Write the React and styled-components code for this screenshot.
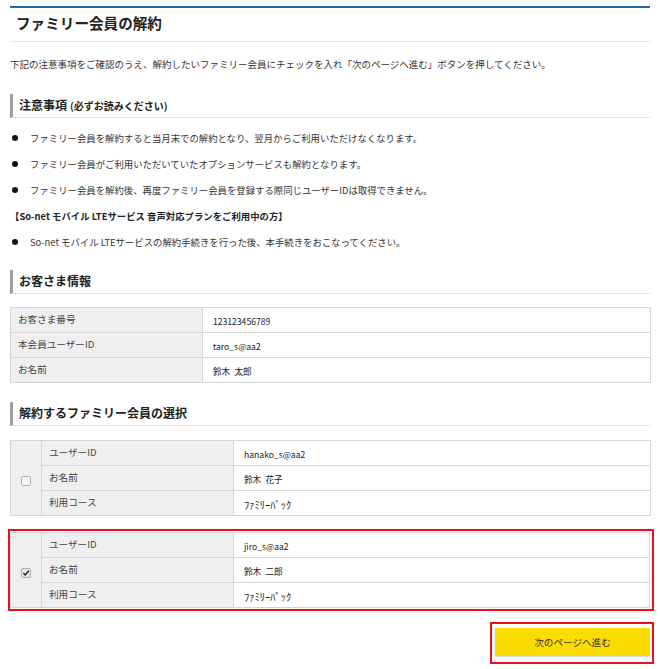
import React from 'react'
import styled, { createGlobalStyle } from 'styled-components'

const GlobalStyle = createGlobalStyle`
  html, body {
    margin: 0;
    padding: 0;
    background: #fff;
  }
  body {
    font-family: "Noto Sans CJK JP", "Noto Sans", sans-serif;
    color: #333;
  }
`

const Page = styled.div`
  width: 640px;
  padding: 6px 10px 0;
`

const TitleBar = styled.div`
  border-top: 2px solid #1d6db3;
  border-bottom: 1px solid #e6e6e6;
  height: 36px;
  box-sizing: border-box;
  padding: 4px 6px 0;
`

const Title = styled.h1`
  margin: 0;
  font-size: 14.6px;
  line-height: 22px;
  font-weight: 700;
  color: #222;
`

const Intro = styled.p`
  margin: 14px 0 0;
  font-size: 9.5px;
  line-height: 16px;
`

const SectionHeading = styled.h2`
  margin: ${p => p.$top}px 0 0;
  height: 24px;
  box-sizing: border-box;
  border-left: 3px solid #9e9e9e;
  border-bottom: 1px dotted #c4c4c4;
  padding-left: 6px;
  font-size: 12px;
  line-height: 22px;
  font-weight: 700;
  color: #222;
`

const Small = styled.span`
  font-size: 10px;
  margin-left: 3px;
`

const NoteList = styled.ul`
  list-style: none;
  margin: 7px 0 0;
  padding: 0;
`

const NoteItem = styled.li`
  display: flex;
  align-items: center;
  height: 26px;
  font-size: 9.4px;
  font-weight: ${p => (p.$bold ? 700 : 400)};
  color: ${p => (p.$bold ? '#222' : '#333')};
`

const Dot = styled.span`
  width: 6px;
  height: 6px;
  border-radius: 50%;
  background: #111;
  margin: 0 12px 0 2px;
  flex: none;
`

const Table = styled.table`
  width: ${p => p.$width || 641}px;
  border-collapse: collapse;
  table-layout: fixed;
  margin-top: ${p => p.$top || 0}px;
  border: 1px solid #d2d2d2;
`

const Row = styled.tr`
  height: 25px;
`

const Label = styled.td`
  background: #efefef;
  border: 1px solid #d6d6d6;
  padding: 0 0 2px 7px;
  font-size: 9.6px;
  color: #444;
  vertical-align: middle;
`

const Value = styled.td`
  background: #fff;
  border: 1px solid #d6d6d6;
  padding: 2px 0 0 10px;
  font-size: ${p => (p.$tiny ? '10.5px' : '8.6px')};
  color: #222;
  vertical-align: middle;
`

const CheckCell = styled.td`
  background: #efefef;
  border: 1px solid #d6d6d6;
  text-align: center;
  vertical-align: middle;
  padding: 0;
`

const Box = styled.span`
  display: inline-block;
  width: 8px;
  height: 8px;
  border: 1px solid #b0b0b0;
  border-radius: 2px;
  background: ${p => (p.$checked ? '#e4e4e4' : '#f6f6f6')};
  position: relative;
  vertical-align: middle;
  svg {
    position: absolute;
    left: 0;
    top: 0;
  }
`

const RedFrame = styled.div`
  margin: 13px -4px 0 -2px;
  border: 2px solid #e8101c;
  padding: 1px 2px 1px 0;
`

const ButtonRow = styled.div`
  display: flex;
  justify-content: flex-end;
  margin: 11px -4px 0 0;
`

const ButtonFrame = styled.div`
  border: 2px solid #e8101c;
  padding: 4px 2px 6px 3px;
`

const NextButton = styled.button`
  width: 155px;
  height: 28px;
  border: none;
  background: #fbdc00;
  box-shadow: 0 1px 2px rgba(0, 0, 0, 0.2);
  font-family: inherit;
  font-size: 9.6px;
  color: #333;
  display: block;
`

function Check({ checked }) {
  return (
    <Box $checked={checked}>
      {checked && (
        <svg width="8" height="8" viewBox="0 0 8 8">
          <path d="M1.4 4.2 L3.2 6 L6.8 1.8" fill="none" stroke="#222" strokeWidth="1.5" />
        </svg>
      )}
    </Box>
  )
}

function MemberTable({ member, checked, top }) {
  return (
    <Table $top={top} $width={checked ? 640 : 641}>
      <colgroup>
        <col style={{ width: 31 }} />
        <col style={{ width: 192 }} />
        <col />
      </colgroup>
      <tbody>
        <Row>
          <CheckCell rowSpan={3}>
            <Check checked={checked} />
          </CheckCell>
          <Label>ユーザーID</Label>
          <Value>{member.id}</Value>
        </Row>
        <Row>
          <Label>お名前</Label>
          <Value>{member.name}</Value>
        </Row>
        <Row>
          <Label>利用コース</Label>
          <Value $tiny>ﾌｧﾐﾘｰﾊﾟｯｸ</Value>
        </Row>
      </tbody>
    </Table>
  )
}

const customer = [
  ['お客さま番号', '123123456789'],
  ['本会員ユーザーID', 'taro_s@aa2'],
  ['お名前', '鈴木\u2002太郎'],
]

export default function App() {
  return (
    <>
      <GlobalStyle />
      <Page>
        <TitleBar>
          <Title>ファミリー会員の解約</Title>
        </TitleBar>
        <Intro>
          下記の注意事項をご確認のうえ、解約したいファミリー会員にチェックを入れ「次のページへ進む」ボタンを押してください。
        </Intro>

        <SectionHeading $top={22}>
          注意事項<Small>(必ずお読みください)</Small>
        </SectionHeading>
        <NoteList>
          <NoteItem><Dot />ファミリー会員を解約すると当月末での解約となり、翌月からご利用いただけなくなります。</NoteItem>
          <NoteItem><Dot />ファミリー会員がご利用いただいていたオプションサービスも解約となります。</NoteItem>
          <NoteItem><Dot />ファミリー会員を解約後、再度ファミリー会員を登録する際同じユーザーIDは取得できません。</NoteItem>
          <NoteItem $bold>【So-net モバイル LTEサービス 音声対応プランをご利用中の方】</NoteItem>
          <NoteItem><Dot />So-net モバイル LTEサービスの解約手続きを行った後、本手続きをおこなってください。</NoteItem>
        </NoteList>

        <SectionHeading $top={15}>お客さま情報</SectionHeading>
        <Table $top={13}>
          <colgroup>
            <col style={{ width: 192 }} />
            <col />
          </colgroup>
          <tbody>
            {customer.map(([k, v]) => (
              <Row key={k}>
                <Label>{k}</Label>
                <Value>{v}</Value>
              </Row>
            ))}
          </tbody>
        </Table>

        <SectionHeading $top={19}>解約するファミリー会員の選択</SectionHeading>
        <MemberTable top={14} member={{ id: 'hanako_s@aa2', name: '鈴木\u2002花子' }} />
        <RedFrame>
          <MemberTable checked member={{ id: 'jiro_s@aa2', name: '鈴木\u2002二郎' }} />
        </RedFrame>

        <ButtonRow>
          <ButtonFrame>
            <NextButton>次のページへ進む</NextButton>
          </ButtonFrame>
        </ButtonRow>
      </Page>
    </>
  )
}
